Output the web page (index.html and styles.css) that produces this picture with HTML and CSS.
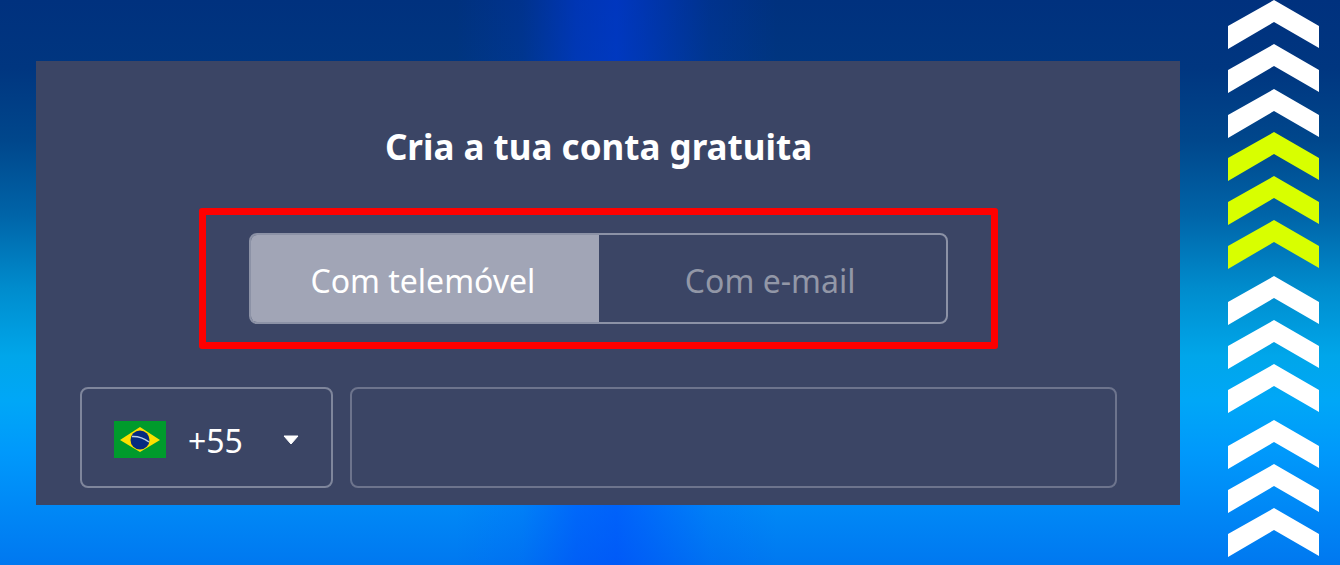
FILE: index.html
```html
<!DOCTYPE html>
<html lang="pt">
<head>
    <meta charset="UTF-8">
    <meta name="viewport" content="width=device-width, initial-scale=1.0">
    <title>Cria a tua conta gratuita</title>
    <link rel="stylesheet" href="styles.css">
</head>
<body>
    <main class="card">
        <h1>Cria a tua conta gratuita</h1>

        <div class="highlight">
            <div class="tabs">
                <button type="button" class="active">Com telemóvel</button>
                <button type="button">Com e-mail</button>
            </div>
        </div>

        <form class="phone-row">
            <div class="country">
                <svg class="flag" viewBox="0 0 52 37" aria-hidden="true">
                    <rect width="52" height="37" fill="#009b2c"/>
                    <path d="M6 19 L26 6 L46 19 L26 31 Z" fill="#fde000"/>
                    <circle cx="26" cy="19" r="9.5" fill="#062b80"/>
                    <path d="M18 15.5 Q27 15 35 21" fill="none" stroke="#b9d0e6" stroke-width="1.5"/>
                </svg>
                <select aria-label="Indicativo do país">
                    <option>+55</option>
                </select>
                <svg class="caret" viewBox="0 0 16 10" aria-hidden="true">
                    <path d="M1 1 H15 L8 9 Z" fill="#fff" stroke="#fff" stroke-linejoin="round"/>
                </svg>
            </div>
            <input type="tel" aria-label="Número de telemóvel">
        </form>
    </main>

    <svg class="arrows" viewBox="0 0 91 557" aria-hidden="true">
        <defs>
            <path id="arrow" d="M0 26 L46 0 L91 26 V48 L46 22 L0 49 Z"/>
        </defs>
        <g fill="#fff">
            <use href="#arrow" y="0"/>
            <use href="#arrow" y="44"/>
            <use href="#arrow" y="89"/>
        </g>
        <g fill="#d8ff00">
            <use href="#arrow" y="132"/>
            <use href="#arrow" y="176"/>
            <use href="#arrow" y="220"/>
        </g>
        <g fill="#fff">
            <use href="#arrow" y="276"/>
            <use href="#arrow" y="320"/>
            <use href="#arrow" y="364"/>
            <use href="#arrow" y="420"/>
            <use href="#arrow" y="464"/>
            <use href="#arrow" y="508"/>
        </g>
    </svg>
</body>
</html>
```

FILE: styles.css
```css
* {
    box-sizing: border-box;
}

body {
    margin: 0;
    min-height: 100vh;
    padding: 0 21px 0 36px;
    display: flex;
    align-items: flex-start;
    gap: 48px;
    font-family: "Noto Sans", "Open Sans", sans-serif;
    color: #fff;
    background:
        linear-gradient(to right, rgba(0, 60, 255, 0) 34%, rgba(0, 60, 255, 0.12) 39%, rgba(0, 60, 255, 0.42) 43%, rgba(0, 60, 255, 0.5) 46%, rgba(0, 60, 255, 0.4) 48%, rgba(0, 60, 255, 0.12) 53%, rgba(0, 60, 255, 0) 58%),
        linear-gradient(#00317e, #003680 12%, #00478c 25%, #0064a8 38%, #008ccd 51%, #00a6ea 63%, #00a7f7 71%, #0099fb 80%, #0088f6 90%, #0078f0);
}

.card {
    flex: 1;
    margin-top: 61px;
    padding: 60px 63px 17px 44px;
    background: #3b4565;
}

h1 {
    margin: 0 0 35px;
    font-size: 35px;
    line-height: 52px;
    text-align: center;
}

.highlight {
    width: 77%;
    margin: 0 auto 38px;
    padding: 18px 43px;
    border: 7px solid #f00;
    border-radius: 3px;
}

.tabs {
    display: flex;
    height: 91px;
    border: 2px solid #8c92a6;
    border-radius: 8px;
    overflow: hidden;
}

.tabs button {
    flex: 1;
    padding: 4px 4px 0 0;
    border: none;
    background: transparent;
    color: #9297a7;
    font-family: inherit;
    font-size: 32px;
    cursor: pointer;
}

.tabs button.active {
    background: #a1a5b6;
    color: #fff;
}

.phone-row {
    display: flex;
    gap: 17px;
}

.country {
    display: flex;
    align-items: center;
    width: 253px;
    height: 101px;
    padding: 4px 32px 0;
    border: 2px solid #7f869c;
    border-radius: 8px;
}

.flag {
    width: 52px;
    height: 37px;
    margin-right: 22px;
}

.country select {
    flex: 1;
    min-width: 0;
    padding: 2px 0 0;
    border: none;
    background: transparent;
    color: #fff;
    font-family: inherit;
    font-size: 32px;
    appearance: none;
}

.caret {
    width: 16px;
    height: 10px;
}

.phone-row input {
    flex: 1;
    min-width: 0;
    height: 101px;
    padding: 0 24px;
    border: 2px solid #6d748d;
    border-radius: 8px;
    background: transparent;
    color: #fff;
    font-family: inherit;
    font-size: 32px;
}

.arrows {
    width: 91px;
    flex: none;
}
```
